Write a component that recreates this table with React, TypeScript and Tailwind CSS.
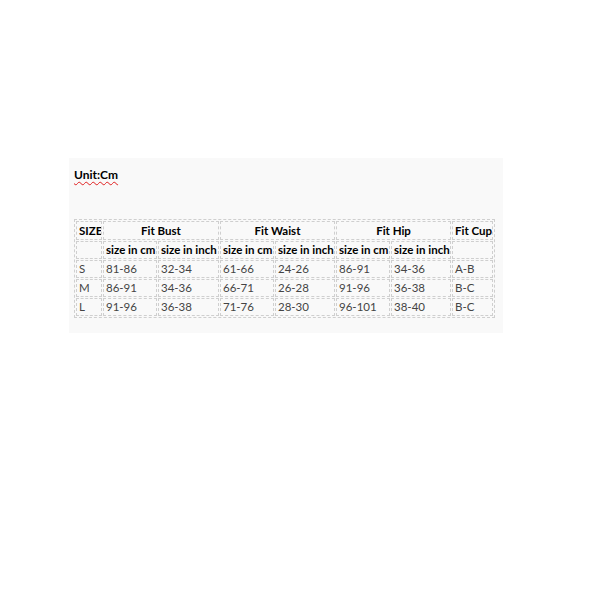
import React from "react";

const rows = [
  ["S", "81-86", "32-34", "61-66", "24-26", "86-91", "34-36", "A-B"],
  ["M", "86-91", "34-36", "66-71", "26-28", "91-96", "36-38", "B-C"],
  ["L", "91-96", "36-38", "71-76", "28-30", "96-101", "38-40", "B-C"],
];

const cell = "border border-dashed border-[#cfcfcf] px-[2px] h-[18px] p-0 leading-[16px] whitespace-nowrap overflow-hidden";

export default function App() {
  return (
    <div className="w-[600px] h-[600px] bg-white pt-[158px] pl-[69px]" style={{ fontFamily: 'Lato, "Noto Sans", sans-serif' }}>
      <div className="w-[434px] h-[175px] bg-[#f9f9f9] pl-[5px] pt-[9px]">
        <div className="text-[12px] font-bold text-black underline decoration-wavy decoration-[#e02020] decoration-1 underline-offset-2 h-[52px] leading-[16px]">
          Unit:Cm
        </div>
        <table className="table-fixed w-[420px] border border-dashed border-[#cfcfcf] border-separate border-spacing-[1px] text-[11.5px] text-[#444]">
          <colgroup>
            <col className="w-[26px]" />
            <col className="w-[54px]" />
            <col className="w-[61px]" />
            <col className="w-[54px]" />
            <col className="w-[60px]" />
            <col className="w-[54px]" />
            <col className="w-[60px]" />
            <col className="w-[41px]" />
          </colgroup>
          <tbody>
            <tr className="font-bold text-black">
              <td className={`${cell} h-[19px]`}>SIZE</td>
              <td className={`${cell} text-center`} colSpan={2}>Fit Bust</td>
              <td className={`${cell} text-center`} colSpan={2}>Fit Waist</td>
              <td className={`${cell} text-center`} colSpan={2}>Fit Hip</td>
              <td className={cell}>Fit Cup</td>
            </tr>
            <tr className="font-bold text-black">
              <td className={cell}></td>
              <td className={cell}>size in cm</td>
              <td className={cell}>size in inch</td>
              <td className={cell}>size in cm</td>
              <td className={cell}>size in inch</td>
              <td className={cell}>size in cm</td>
              <td className={cell}>size in inch</td>
              <td className={cell}></td>
            </tr>
            {rows.map((r) => (
              <tr key={r[0]}>
                {r.map((v, i) => (
                  <td key={i} className={cell}>{v}</td>
                ))}
              </tr>
            ))}
          </tbody>
        </table>
      </div>
    </div>
  );
}
